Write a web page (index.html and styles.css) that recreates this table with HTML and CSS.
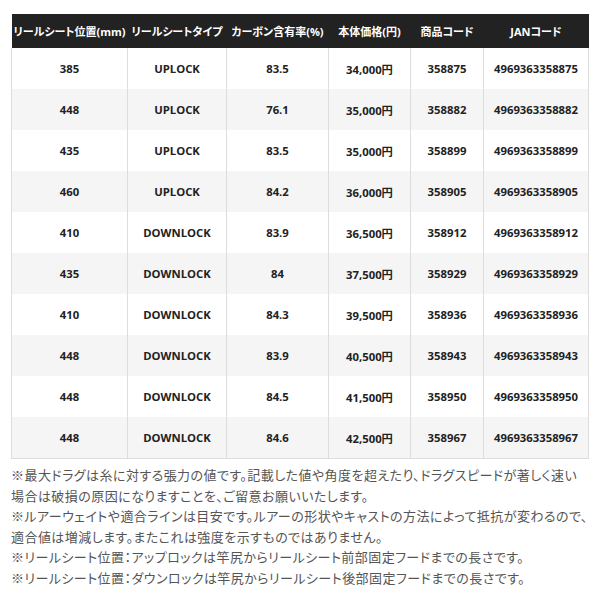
FILE: index.html
```html
<!DOCTYPE html>
<html lang="ja">
<head>
<meta charset="utf-8">
<link rel="stylesheet" href="styles.css">
</head>
<body>
<div class="wrap">
<table class="spec">
<colgroup>
<col class="c1"><col class="c2"><col class="c3"><col class="c4"><col class="c5"><col class="c6">
</colgroup>
<thead>
<tr><th>リールシート位置(mm)</th><th>リールシートタイプ</th><th>カーボン含有率(%)</th><th>本体価格(円)</th><th>商品コード</th><th>JANコード</th></tr>
</thead>
<tbody>
<tr><td>385</td><td>UPLOCK</td><td>83.5</td><td>34,000円</td><td>358875</td><td>4969363358875</td></tr>
<tr><td>448</td><td>UPLOCK</td><td>76.1</td><td>35,000円</td><td>358882</td><td>4969363358882</td></tr>
<tr><td>435</td><td>UPLOCK</td><td>83.5</td><td>35,000円</td><td>358899</td><td>4969363358899</td></tr>
<tr><td>460</td><td>UPLOCK</td><td>84.2</td><td>36,000円</td><td>358905</td><td>4969363358905</td></tr>
<tr><td>410</td><td>DOWNLOCK</td><td>83.9</td><td>36,500円</td><td>358912</td><td>4969363358912</td></tr>
<tr><td>435</td><td>DOWNLOCK</td><td>84</td><td>37,500円</td><td>358929</td><td>4969363358929</td></tr>
<tr><td>410</td><td>DOWNLOCK</td><td>84.3</td><td>39,500円</td><td>358936</td><td>4969363358936</td></tr>
<tr><td>448</td><td>DOWNLOCK</td><td>83.9</td><td>40,500円</td><td>358943</td><td>4969363358943</td></tr>
<tr><td>448</td><td>DOWNLOCK</td><td>84.5</td><td>41,500円</td><td>358950</td><td>4969363358950</td></tr>
<tr><td>448</td><td>DOWNLOCK</td><td>84.6</td><td>42,500円</td><td>358967</td><td>4969363358967</td></tr>
</tbody>
</table>
<div class="notes">
<p>※最大ドラグは糸に対する張力の値です。記載した値や角度を超えたり、ドラグスピードが著しく速い<br>場合は破損の原因になりますことを、ご留意お願いいたします。</p>
<p>※ルアーウェイトや適合ラインは目安です。ルアーの形状やキャストの方法によって抵抗が変わるので、<br>適合値は増減します。またこれは強度を示すものではありません。</p>
<p>※リールシート位置：アップロックは竿尻からリールシート前部固定フードまでの長さです。</p>
<p>※リールシート位置：ダウンロックは竿尻からリールシート後部固定フードまでの長さです。</p>
</div>
</div>
</body>
</html>
```
FILE: styles.css
```css
html, body {
  margin: 0;
  padding: 0;
  background: #fff;
}
.wrap {
  padding: 14px 12px 0 11px;
  width: 577px;
}
.spec {
  width: 577px;
  border-collapse: collapse;
  table-layout: fixed;
  font-family: "Open Sans", "Noto Sans CJK JP", sans-serif;
  font-weight: 700;
  font-size: 11.3px;
  color: #222;
}
.c1 { width: 116px; }
.c2 { width: 99px; }
.c3 { width: 102px; }
.c4 { width: 82px; }
.c5 { width: 73px; }
.c6 { width: 105px; }
.spec th {
  background: #222;
  color: #fff;
  height: 34px;
  padding: 0;
  font-weight: 700;
  font-size: 11px;
  font-feature-settings: "palt";
  white-space: nowrap;
  text-align: center;
}
.spec td {
  height: 41px;
  padding: 0;
  text-align: center;
  border-left: 1px solid #ddd;
  border-right: 1px solid #ddd;
}
.spec tbody tr:nth-child(even) td {
  background: #f5f5f5;
}
.spec tbody tr:last-child td {
  border-bottom: 1px solid #ddd;
}
.notes {
  margin-top: 6px;
  font-family: "Noto Sans CJK JP", sans-serif;
  font-size: 13px;
  font-feature-settings: "palt";
  letter-spacing: 0.45px;
  line-height: 20.5px;
  color: #555;
  white-space: nowrap;
}
.notes p {
  margin: 0;
}
```
